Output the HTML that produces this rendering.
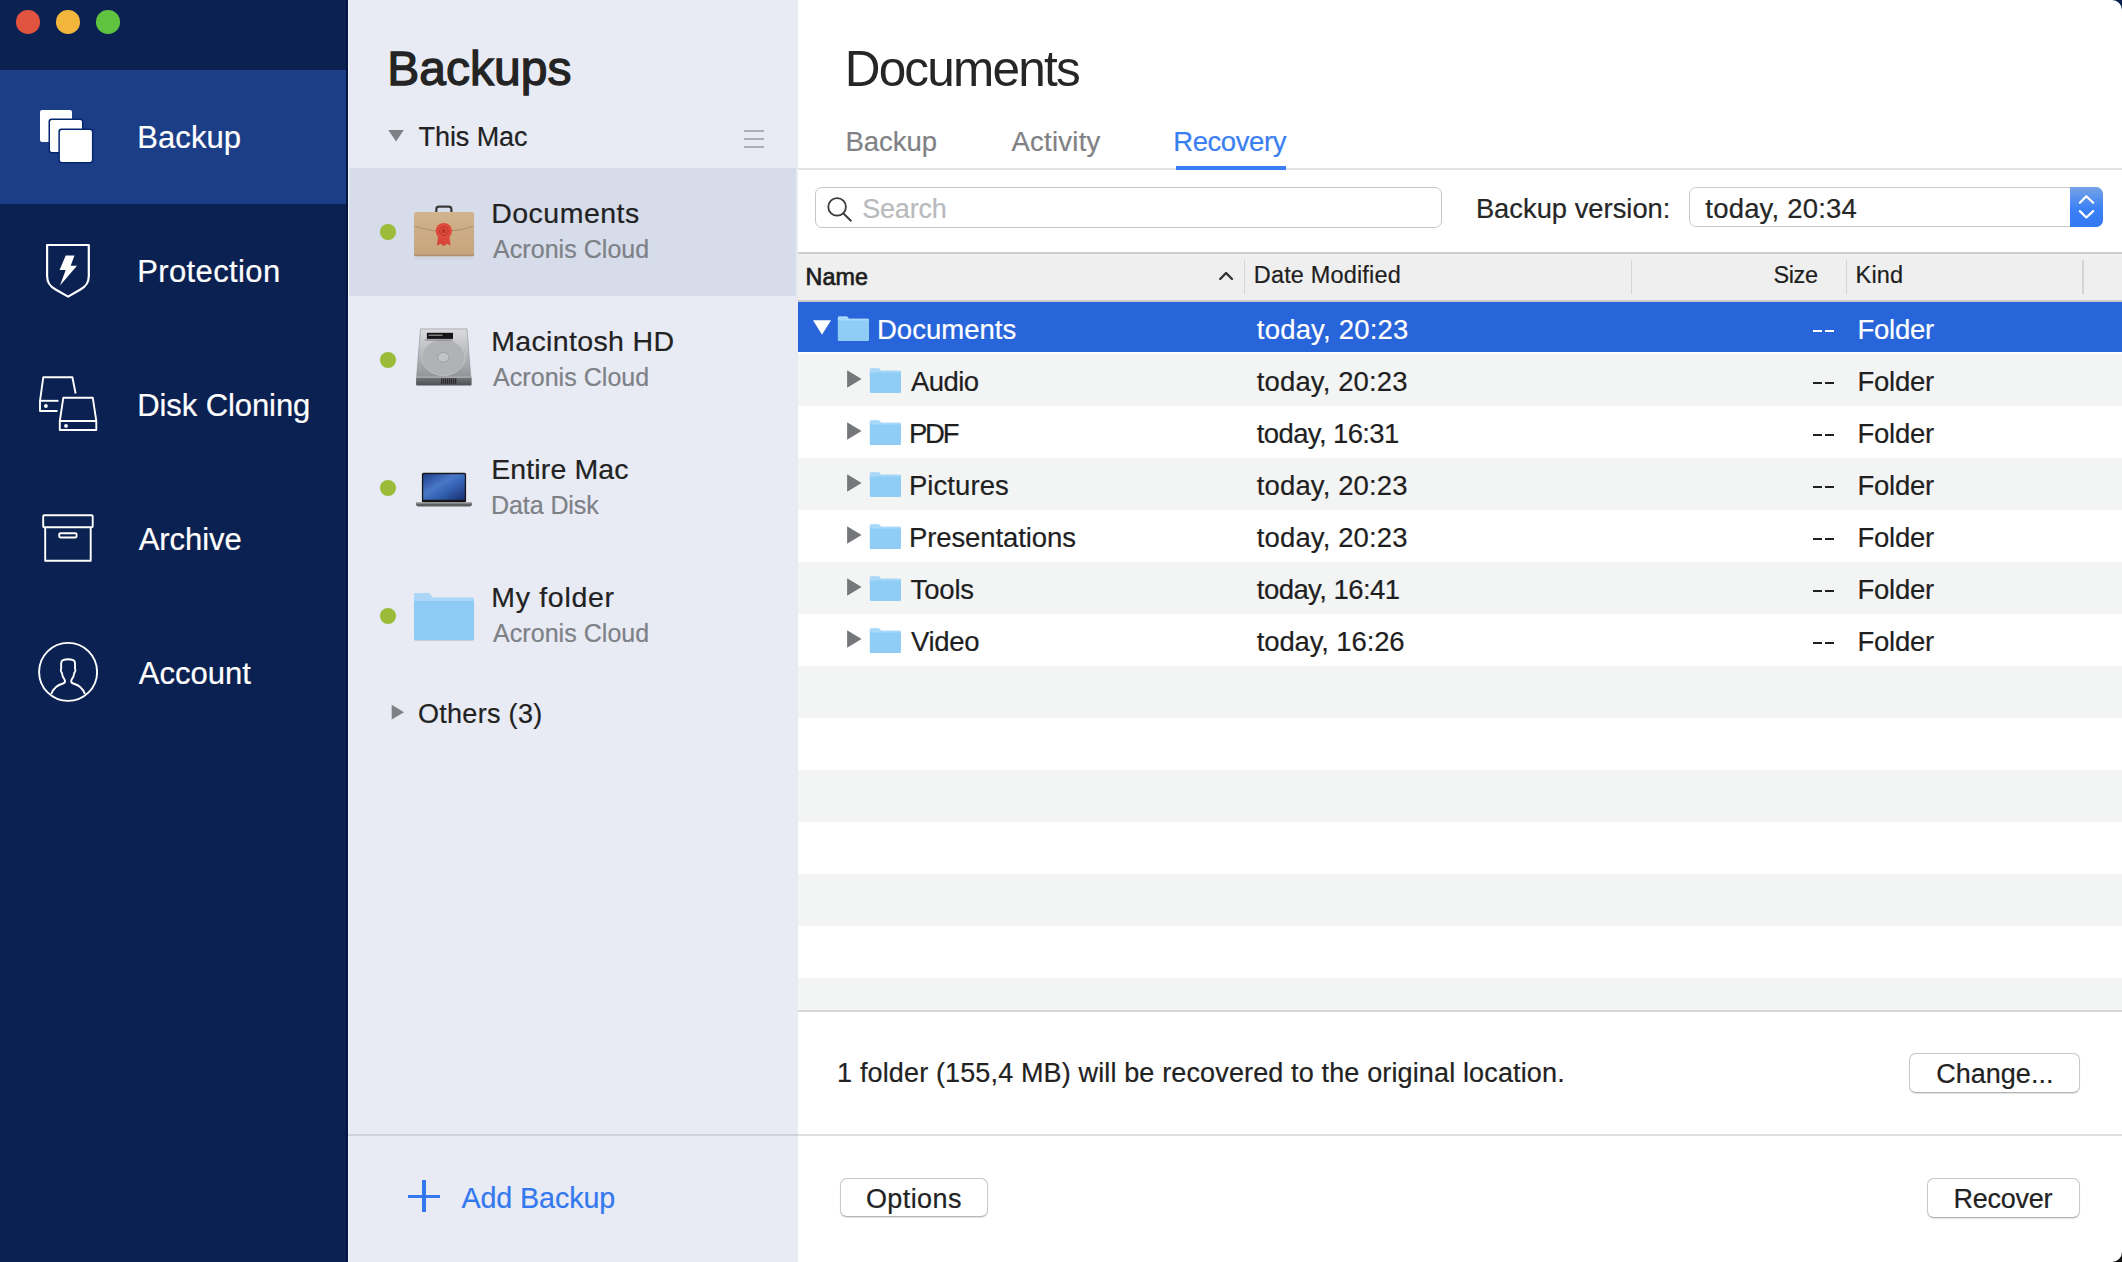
<!DOCTYPE html>
<html><head><meta charset="utf-8"><style>
html,body{margin:0;padding:0;}
body{width:2122px;height:1262px;position:relative;overflow:hidden;background:#0b2151;font-family:"Liberation Sans",sans-serif;}
.t{position:absolute;line-height:1;white-space:nowrap;-webkit-text-stroke:0.2px currentColor;}
</style></head><body>
<div style="position:absolute;left:0px;top:0px;width:348px;height:1262px;background:#0b2151;"></div>
<div style="position:absolute;left:0px;top:70px;width:346px;height:134px;background:#1b3e87;"></div>
<div style="position:absolute;left:346px;top:0px;width:2px;height:1262px;background:#031541;"></div>
<div style="position:absolute;left:16.0px;top:10.099999999999998px;width:23.6px;height:23.6px;border-radius:50%;background:#e0533f"></div>
<div style="position:absolute;left:56.0px;top:10.099999999999998px;width:23.6px;height:23.6px;border-radius:50%;background:#f3b63d"></div>
<div style="position:absolute;left:96.0px;top:10.099999999999998px;width:23.6px;height:23.6px;border-radius:50%;background:#5fc340"></div>
<div class="t" style="left:137.3px;top:121.8px;font-size:31px;color:#fff;letter-spacing:0.08px;">Backup</div>
<div class="t" style="left:137.2px;top:255.8px;font-size:31px;color:#fff;letter-spacing:0.38px;">Protection</div>
<div class="t" style="left:137.2px;top:389.6px;font-size:31px;color:#fff;letter-spacing:-0.08px;">Disk Cloning</div>
<div class="t" style="left:138.7px;top:523.5px;font-size:31px;color:#fff;letter-spacing:-0.07px;">Archive</div>
<div class="t" style="left:138.7px;top:657.6px;font-size:31px;color:#fff;letter-spacing:0.02px;">Account</div>
<svg style="position:absolute;left:0;top:0" width="348" height="760" viewBox="0 0 348 760">
<rect x="40" y="110" width="32" height="32" rx="2" fill="#fff"/>
<rect x="48.5" y="118.5" width="35" height="35" rx="3" fill="#062670"/>
<rect x="50" y="120" width="32" height="32" rx="2" fill="#fff"/>
<rect x="58.4" y="128.4" width="35" height="35" rx="3" fill="#062670"/>
<rect x="59.9" y="129.9" width="32" height="32" rx="2" fill="#fff"/>
<g fill="none" stroke="#fff" stroke-width="2.2" stroke-linejoin="round">
<path d="M47.1 245 H88.8 V276 C88.8 283 86 286.5 80 289.8 L68.1 296.6 L56 289.8 C50 286.5 47.1 283 47.1 276 Z"/>
</g>
<path fill="#fff" d="M65.7 255.4 H74.5 L70.7 265.7 H77 L60 285.5 L65.7 270 H59.6 Z"/>
<g fill="none" stroke="#fff" stroke-width="1.9" stroke-linejoin="round">
<path d="M57.5 411 H40 V400.8 L43.3 377.2 H72.4 L75.6 393.5"/>
<path d="M40 400.8 H58.5"/>
<path d="M59.8 430 V421 L63.3 397.8 H92.8 L96.3 421 V430 Z"/>
<path d="M59.8 421 H96.3"/>
<rect x="43.2" y="515.2" width="49.5" height="12" rx="1"/>
<path d="M45.2 527.2 V560.7 H90.7 V527.2"/>
<rect x="59.2" y="533.3" width="17.4" height="4.2" rx="1.2"/>
<circle cx="68.1" cy="671.9" r="29"/>
<path d="M51.3 694 C53.5 688 57 685 63 683.5 C64.5 683 65.3 681.5 64.8 680 C63 677.5 62 675 61.8 672.5 C60.8 672 60.6 670 61.2 668.7 C61 666 61 663 61.5 661.5 C62.5 659.8 65 659.2 68.1 659.2 C71.2 659.2 73.7 659.8 74.7 661.5 C75.2 663 75.2 666 75 668.7 C75.6 670 75.4 672 74.4 672.5 C74.2 675 73.2 677.5 71.4 680 C70.9 681.5 71.7 683 73.2 683.5 C79.2 685 82.7 688 84.9 694"/>
</g>
<g fill="#fff"><circle cx="45.9" cy="406" r="1.9"/><circle cx="66" cy="425.9" r="1.9"/></g>
</svg>
<div style="position:absolute;left:348px;top:0px;width:450px;height:1262px;background:#e8ebf4;"></div>
<div style="position:absolute;left:348px;top:0px;width:1px;height:1262px;background:#f4f6fc;"></div>
<div style="position:absolute;left:349px;top:168px;width:447px;height:128px;background:#d6dcea;"></div>
<div class="t" style="left:387.3px;top:45.0px;font-size:48px;color:#242424;-webkit-text-stroke:1.3px #242424;">Backups</div>
<svg style="position:absolute;left:380px;top:120px" width="40" height="40"><path d="M8.3 10 H23.8 L16.05 21.6 Z" fill="#7e8185"/></svg>
<div class="t" style="left:418.6px;top:123.7px;font-size:27px;color:#222;letter-spacing:-0.09px;">This Mac</div>
<div style="position:absolute;left:743.6px;top:130px;width:20.6px;height:2px;background:#aeafb2;"></div>
<div style="position:absolute;left:743.6px;top:138px;width:20.6px;height:2px;background:#aeafb2;"></div>
<div style="position:absolute;left:743.6px;top:146px;width:20.6px;height:2px;background:#aeafb2;"></div>
<div style="position:absolute;left:380.2px;top:224.04999999999998px;width:15.7px;height:15.7px;border-radius:50%;background:#9cbb3b"></div>
<div class="t" style="left:491.2px;top:199.2px;font-size:28.5px;color:#222;letter-spacing:0.49px;">Documents</div>
<div class="t" style="left:493.1px;top:236.5px;font-size:25px;color:#7d8186;letter-spacing:0.04px;">Acronis Cloud</div>
<div style="position:absolute;left:380.2px;top:352.04999999999995px;width:15.7px;height:15.7px;border-radius:50%;background:#9cbb3b"></div>
<div class="t" style="left:491.2px;top:327.2px;font-size:28.5px;color:#222;letter-spacing:0.35px;">Macintosh HD</div>
<div class="t" style="left:493.1px;top:364.5px;font-size:25px;color:#7d8186;letter-spacing:0.04px;">Acronis Cloud</div>
<div style="position:absolute;left:380.2px;top:480.04999999999995px;width:15.7px;height:15.7px;border-radius:50%;background:#9cbb3b"></div>
<div class="t" style="left:491.2px;top:455.2px;font-size:28.5px;color:#222;letter-spacing:0.12px;">Entire Mac</div>
<div class="t" style="left:491.1px;top:492.5px;font-size:25px;color:#7d8186;letter-spacing:-0.09px;">Data Disk</div>
<div style="position:absolute;left:380.2px;top:608.0500000000001px;width:15.7px;height:15.7px;border-radius:50%;background:#9cbb3b"></div>
<div class="t" style="left:491.2px;top:583.2px;font-size:28.5px;color:#222;letter-spacing:0.71px;">My folder</div>
<div class="t" style="left:493.1px;top:620.5px;font-size:25px;color:#7d8186;letter-spacing:0.04px;">Acronis Cloud</div>
<svg style="position:absolute;left:405px;top:195px" width="80" height="70" viewBox="0 0 80 70">
<defs><linearGradient id="bc" x1="0" y1="0" x2="0" y2="1"><stop offset="0" stop-color="#d2b48f"/><stop offset="0.35" stop-color="#cdae87"/><stop offset="1" stop-color="#c7a57d"/></linearGradient></defs>
<rect x="10" y="62" width="58" height="2.5" rx="1" fill="#cfd3dd"/>
<path d="M31.3 17.2 V14.3 Q31.3 11.7 33.9 11.7 H43.8 Q46.4 11.7 46.4 14.3 V17.2" fill="none" stroke="#3a3a3a" stroke-width="2.2"/>
<rect x="9" y="16.9" width="60.1" height="44.3" rx="2.2" fill="url(#bc)"/>
<path d="M9.5 31.3 Q24 35.5 33 36 M45 36 Q56 35.5 68.6 31.3" fill="none" stroke="#9e8466" stroke-width="0.9" opacity="0.8"/>
<rect x="9" y="59.5" width="60.1" height="1.7" fill="#9b8264" opacity="0.6"/>
<path d="M33.3 40 L31.8 50.8 L35.5 48.8 L38.8 51.2 L42 48.8 L45.6 50.8 L44.2 40 Z" fill="#d9473a"/>
<circle cx="38.8" cy="36.1" r="8.2" fill="#de4b3c"/>
<circle cx="38.8" cy="36.1" r="4.3" fill="none" stroke="#b8352b" stroke-width="1"/>
<circle cx="38.8" cy="36.1" r="2" fill="#b8352b"/>
</svg>
<svg style="position:absolute;left:410px;top:322px" width="70" height="70" viewBox="0 0 70 70">
<defs><linearGradient id="hd" x1="0" y1="0" x2="0" y2="1"><stop offset="0" stop-color="#dcdcde"/><stop offset="0.5" stop-color="#b9babd"/><stop offset="1" stop-color="#939497"/></linearGradient>
<linearGradient id="hdf" x1="0" y1="0" x2="0" y2="1"><stop offset="0" stop-color="#77787b"/><stop offset="1" stop-color="#4e4f52"/></linearGradient></defs>
<path d="M10.5 6.9 H57 L60.8 54.8 H6.6 Z" fill="url(#hd)" stroke="#8c8d90" stroke-width="0.6"/>
<ellipse cx="33.4" cy="35.5" rx="21.5" ry="18" fill="#b1b2b5" stroke="#c4c5c7" stroke-width="0.8"/>
<ellipse cx="33.4" cy="35.3" rx="5.6" ry="4.8" fill="#c2c3c5" stroke="#8e8f92" stroke-width="0.6"/>
<rect x="16.9" y="10.8" width="26.1" height="6.1" fill="#151515"/><rect x="18.5" y="12.6" width="14" height="1.3" fill="#8d8d8d"/>
<rect x="14.8" y="17.5" width="28" height="1.2" fill="#8a8b8e"/>
<rect x="6.1" y="54.6" width="55.5" height="9" rx="1" fill="url(#hdf)"/>
<rect x="6.1" y="54.6" width="55.5" height="1" fill="#c8c8ca"/>
<g fill="#1a1a1a"><rect x="31.2" y="56.3" width="1" height="5.5"/><rect x="33.2" y="56.3" width="1" height="5.5"/><rect x="35.2" y="56.3" width="1" height="5.5"/><rect x="37.2" y="56.3" width="1" height="5.5"/><rect x="39.2" y="56.3" width="1" height="5.5"/><rect x="41.2" y="56.3" width="1" height="5.5"/><rect x="43.2" y="56.3" width="1" height="5.5"/><rect x="45.2" y="56.3" width="1" height="5.5"/></g>
</svg>
<svg style="position:absolute;left:405px;top:455px" width="80" height="60" viewBox="0 0 80 60">
<defs><linearGradient id="scr" x1="0" y1="0" x2="1" y2="1"><stop offset="0" stop-color="#1f3f8c"/><stop offset="0.4" stop-color="#4a78c8"/><stop offset="0.6" stop-color="#3563b4"/><stop offset="1" stop-color="#182f70"/></linearGradient></defs>
<rect x="16.9" y="17.8" width="44.2" height="29.8" rx="1.6" fill="#161616"/>
<rect x="18.2" y="19.2" width="41.6" height="25.6" fill="url(#scr)"/>
<path d="M11.1 47.4 H66.9 V49.6 Q66.9 51.6 64.5 51.6 H13.5 Q11.1 51.6 11.1 49.6 Z" fill="#5d5e61"/>
<rect x="11.1" y="47.4" width="55.8" height="1.1" fill="#a9aaad"/>
</svg>
<svg style="position:absolute;left:405px;top:580px" width="80" height="70" viewBox="0 0 80 70">
<path d="M9 14.6 Q9 13 10.6 13 H22.6 Q24 13 25 14.3 L27.6 17.8 H67.3 Q69.1 17.8 69.1 19.6 V58.4 Q69.1 60.2 67.3 60.2 H10.8 Q9 60.2 9 58.4 Z" fill="#8dcbf5"/>
<path d="M9 14.6 Q9 13 10.6 13 H22.6 Q24 13 25 14.3 L27.6 17.8 H67.3 Q69.1 17.8 69.1 19.6 V21.1 H9 Z" fill="#abd6f7"/>
<rect x="9.5" y="60.2" width="59" height="1" fill="#c9ccd6"/>
</svg>
<div class="t" style="left:417.9px;top:701.1px;font-size:27px;color:#222;letter-spacing:0.31px;">Others (3)</div>
<svg style="position:absolute;left:380px;top:695px" width="40" height="40"><path d="M11.7 9.7 V24.6 L24 17.15 Z" fill="#7e8185"/></svg>
<div style="position:absolute;left:348px;top:1134px;width:450px;height:1.5px;background:#cfd2d9;"></div>
<div style="position:absolute;left:407.9px;top:1194.5px;width:32.1px;height:3.2px;background:#3478f0;"></div>
<div style="position:absolute;left:422.4px;top:1179.9px;width:3.2px;height:32.1px;background:#3478f0;"></div>
<div class="t" style="left:461.4px;top:1183.7px;font-size:28.7px;color:#3478f0;letter-spacing:-0.09px;">Add Backup</div>
<div style="position:absolute;left:798px;top:0px;width:1324px;height:1262px;background:#fff;"></div>
<div class="t" style="left:844.7px;top:44.3px;font-size:49.5px;color:#262626;letter-spacing:-1.8px;-webkit-text-stroke:0;">Documents</div>
<div class="t" style="left:845.4px;top:127.6px;font-size:27.5px;color:#808184;letter-spacing:-0.02px;">Backup</div>
<div class="t" style="left:1011.5px;top:127.6px;font-size:27.5px;color:#808184;letter-spacing:0.24px;">Activity</div>
<div class="t" style="left:1173.2px;top:127.6px;font-size:27.5px;color:#3a7ff2;letter-spacing:-0.42px;">Recovery</div>
<div style="position:absolute;left:798px;top:168px;width:1324px;height:2px;background:#e3e4e5;"></div>
<div style="position:absolute;left:1176px;top:166px;width:110px;height:4px;background:#3a7ff2;"></div>
<div style="position:absolute;left:815.2px;top:187.1px;width:627px;height:41.4px;box-sizing:border-box;border:1.5px solid #c6c6c9;border-radius:7px;background:#fff"></div>
<svg style="position:absolute;left:820px;top:190px" width="40" height="40"><circle cx="17.1" cy="16.9" r="8.8" fill="none" stroke="#3c3c3c" stroke-width="1.8"/><path d="M23.2 23.2 L31.4 31.3" stroke="#3c3c3c" stroke-width="1.9"/></svg>
<div class="t" style="left:862.2px;top:195.9px;font-size:27px;color:#b9babd;letter-spacing:-0.19px;">Search</div>
<div class="t" style="left:1475.9px;top:194.8px;font-size:27.3px;color:#262626;letter-spacing:0.02px;">Backup version:</div>
<div style="position:absolute;left:1688.7px;top:187.2px;width:414px;height:39.6px;box-sizing:border-box;border:1.5px solid #c9c9cc;border-radius:7px;background:#fff"></div>
<div style="position:absolute;left:2070px;top:187px;width:33px;height:40px;border-radius:0 7px 7px 0;background:linear-gradient(#76a3e6,#3a80f6 55%,#3479f2)"></div>
<svg style="position:absolute;left:2070px;top:187px" width="33" height="40"><path d="M9.9 15.8 L16.3 9.2 L23.2 15.8 M9.9 24.1 L16.3 30.5 L23.2 24.1" fill="none" stroke="#fff" stroke-width="2.2" stroke-linecap="round" stroke-linejoin="round"/></svg>
<div class="t" style="left:1705.3px;top:194.6px;font-size:27.5px;color:#262626;letter-spacing:0.2px;">today, 20:34</div>
<div style="position:absolute;left:798px;top:252px;width:1324px;height:1.5px;background:#cdcdcd;"></div>
<div style="position:absolute;left:798px;top:253.5px;width:1324px;height:46.5px;background:#efefef;"></div>
<div style="position:absolute;left:798px;top:300px;width:1324px;height:2px;background:#cacaca;"></div>
<div style="position:absolute;left:1244.2px;top:260px;width:1.3px;height:34px;background:#d3d4d8;"></div>
<div style="position:absolute;left:1630.7px;top:260px;width:1.3px;height:34px;background:#d3d4d8;"></div>
<div style="position:absolute;left:1846.1000000000001px;top:260px;width:1.3px;height:34px;background:#d3d4d8;"></div>
<div style="position:absolute;left:2082.3px;top:260px;width:1.3px;height:34px;background:#d3d4d8;"></div>
<div class="t" style="left:805.6px;top:265.5px;font-size:23.3px;color:#1e1e1e;letter-spacing:0.1px;-webkit-text-stroke:0.7px #1e1e1e;">Name</div>
<svg style="position:absolute;left:1210px;top:265px" width="30" height="20"><path d="M10.2 14 L16.1 8 L22 14" fill="none" stroke="#333" stroke-width="2.4" stroke-linecap="round" stroke-linejoin="round"/></svg>
<div class="t" style="left:1253.8px;top:263.8px;font-size:23.5px;color:#1e1e1e;letter-spacing:0.16px;">Date Modified</div>
<div class="t" style="left:1773.5px;top:264.0px;font-size:23.5px;color:#1e1e1e;letter-spacing:-0.4px;">Size</div>
<div class="t" style="left:1855.6px;top:264.0px;font-size:23.5px;color:#1e1e1e;letter-spacing:0.12px;">Kind</div>
<div style="position:absolute;left:798px;top:302px;width:1324px;height:50px;background:#2864da;"></div>
<div style="position:absolute;left:798px;top:354px;width:1324px;height:52px;background:#f3f4f4;"></div>
<div style="position:absolute;left:798px;top:458px;width:1324px;height:52px;background:#f3f4f4;"></div>
<div style="position:absolute;left:798px;top:562px;width:1324px;height:52px;background:#f3f4f4;"></div>
<div style="position:absolute;left:798px;top:666px;width:1324px;height:52px;background:#f3f4f4;"></div>
<div style="position:absolute;left:798px;top:770px;width:1324px;height:52px;background:#f3f4f4;"></div>
<div style="position:absolute;left:798px;top:874px;width:1324px;height:52px;background:#f3f4f4;"></div>
<div style="position:absolute;left:798px;top:978px;width:1324px;height:32px;background:#f3f4f4;"></div>
<div style="position:absolute;left:798px;top:1010px;width:1324px;height:1.5px;background:#d8d8d8;"></div>
<svg style="position:absolute;left:805px;top:312px" width="40" height="30"><path d="M8 8.2 H26 L17 22.7 Z" fill="#fff"/></svg>
<svg style="position:absolute;left:837px;top:315.6px" width="33" height="26" viewBox="0 0 33 26"><path d="M0.8 2 Q0.8 0.6 2.2 0.6 H10 L12 2.8 H30.8 Q32 2.8 32 4 V23.8 Q32 25 30.8 25 H2 Q0.8 25 0.8 23.8 Z" fill="#8fcdf6"/><path d="M0.8 2 Q0.8 0.6 2.2 0.6 H10 L12 2.8 H30.8 Q32 2.8 32 4 V4.6 H0.8 Z" fill="#a9d8f8"/></svg>
<div class="t" style="left:877.0px;top:315.7px;font-size:27.5px;color:#fff;letter-spacing:0.01px;">Documents</div>
<div class="t" style="left:1256.8px;top:315.7px;font-size:27.5px;color:#fff;letter-spacing:0.2px;">today, 20:23</div>
<div style="position:absolute;left:1812.8px;top:329.6px;width:9.2px;height:2.4px;background:#fff;"></div>
<div style="position:absolute;left:1824.9px;top:329.6px;width:9.2px;height:2.4px;background:#fff;"></div>
<div class="t" style="left:1857.4px;top:315.7px;font-size:27.5px;color:#fff;letter-spacing:-0.22px;">Folder</div>
<svg style="position:absolute;left:840px;top:362.2px" width="30" height="30"><path d="M7.1 8.3 V25.8 L21.6 17.05 Z" fill="#75777b"/></svg>
<svg style="position:absolute;left:869px;top:367.8px" width="33" height="26" viewBox="0 0 33 26"><path d="M0.8 2 Q0.8 0.6 2.2 0.6 H10 L12 2.8 H30.8 Q32 2.8 32 4 V23.8 Q32 25 30.8 25 H2 Q0.8 25 0.8 23.8 Z" fill="#8fcdf6"/><path d="M0.8 2 Q0.8 0.6 2.2 0.6 H10 L12 2.8 H30.8 Q32 2.8 32 4 V4.6 H0.8 Z" fill="#a9d8f8"/></svg>
<div class="t" style="left:911.1px;top:367.7px;font-size:27.5px;color:#1f1f1f;letter-spacing:-0.57px;">Audio</div>
<div class="t" style="left:1256.8px;top:367.7px;font-size:27.5px;color:#1f1f1f;letter-spacing:0.12px;">today, 20:23</div>
<div style="position:absolute;left:1812.8px;top:381.6px;width:9.2px;height:2.4px;background:#1f1f1f;"></div>
<div style="position:absolute;left:1824.9px;top:381.6px;width:9.2px;height:2.4px;background:#1f1f1f;"></div>
<div class="t" style="left:1857.4px;top:367.7px;font-size:27.5px;color:#1f1f1f;letter-spacing:-0.22px;">Folder</div>
<svg style="position:absolute;left:840px;top:414.2px" width="30" height="30"><path d="M7.1 8.3 V25.8 L21.6 17.05 Z" fill="#75777b"/></svg>
<svg style="position:absolute;left:869px;top:419.8px" width="33" height="26" viewBox="0 0 33 26"><path d="M0.8 2 Q0.8 0.6 2.2 0.6 H10 L12 2.8 H30.8 Q32 2.8 32 4 V23.8 Q32 25 30.8 25 H2 Q0.8 25 0.8 23.8 Z" fill="#8fcdf6"/><path d="M0.8 2 Q0.8 0.6 2.2 0.6 H10 L12 2.8 H30.8 Q32 2.8 32 4 V4.6 H0.8 Z" fill="#a9d8f8"/></svg>
<div class="t" style="left:908.9px;top:419.7px;font-size:27.5px;color:#1f1f1f;letter-spacing:-2.13px;">PDF</div>
<div class="t" style="left:1256.8px;top:419.7px;font-size:27.5px;color:#1f1f1f;letter-spacing:-0.62px;">today, 16:31</div>
<div style="position:absolute;left:1812.8px;top:433.6px;width:9.2px;height:2.4px;background:#1f1f1f;"></div>
<div style="position:absolute;left:1824.9px;top:433.6px;width:9.2px;height:2.4px;background:#1f1f1f;"></div>
<div class="t" style="left:1857.4px;top:419.7px;font-size:27.5px;color:#1f1f1f;letter-spacing:-0.22px;">Folder</div>
<svg style="position:absolute;left:840px;top:466.2px" width="30" height="30"><path d="M7.1 8.3 V25.8 L21.6 17.05 Z" fill="#75777b"/></svg>
<svg style="position:absolute;left:869px;top:471.8px" width="33" height="26" viewBox="0 0 33 26"><path d="M0.8 2 Q0.8 0.6 2.2 0.6 H10 L12 2.8 H30.8 Q32 2.8 32 4 V23.8 Q32 25 30.8 25 H2 Q0.8 25 0.8 23.8 Z" fill="#8fcdf6"/><path d="M0.8 2 Q0.8 0.6 2.2 0.6 H10 L12 2.8 H30.8 Q32 2.8 32 4 V4.6 H0.8 Z" fill="#a9d8f8"/></svg>
<div class="t" style="left:908.9px;top:471.7px;font-size:27.5px;color:#1f1f1f;letter-spacing:0.08px;">Pictures</div>
<div class="t" style="left:1256.8px;top:471.7px;font-size:27.5px;color:#1f1f1f;letter-spacing:0.12px;">today, 20:23</div>
<div style="position:absolute;left:1812.8px;top:485.6px;width:9.2px;height:2.4px;background:#1f1f1f;"></div>
<div style="position:absolute;left:1824.9px;top:485.6px;width:9.2px;height:2.4px;background:#1f1f1f;"></div>
<div class="t" style="left:1857.4px;top:471.7px;font-size:27.5px;color:#1f1f1f;letter-spacing:-0.22px;">Folder</div>
<svg style="position:absolute;left:840px;top:518.2px" width="30" height="30"><path d="M7.1 8.3 V25.8 L21.6 17.05 Z" fill="#75777b"/></svg>
<svg style="position:absolute;left:869px;top:523.8px" width="33" height="26" viewBox="0 0 33 26"><path d="M0.8 2 Q0.8 0.6 2.2 0.6 H10 L12 2.8 H30.8 Q32 2.8 32 4 V23.8 Q32 25 30.8 25 H2 Q0.8 25 0.8 23.8 Z" fill="#8fcdf6"/><path d="M0.8 2 Q0.8 0.6 2.2 0.6 H10 L12 2.8 H30.8 Q32 2.8 32 4 V4.6 H0.8 Z" fill="#a9d8f8"/></svg>
<div class="t" style="left:908.9px;top:523.7px;font-size:27.5px;color:#1f1f1f;letter-spacing:-0.09px;">Presentations</div>
<div class="t" style="left:1256.8px;top:523.7px;font-size:27.5px;color:#1f1f1f;letter-spacing:0.12px;">today, 20:23</div>
<div style="position:absolute;left:1812.8px;top:537.6px;width:9.2px;height:2.4px;background:#1f1f1f;"></div>
<div style="position:absolute;left:1824.9px;top:537.6px;width:9.2px;height:2.4px;background:#1f1f1f;"></div>
<div class="t" style="left:1857.4px;top:523.7px;font-size:27.5px;color:#1f1f1f;letter-spacing:-0.22px;">Folder</div>
<svg style="position:absolute;left:840px;top:570.2px" width="30" height="30"><path d="M7.1 8.3 V25.8 L21.6 17.05 Z" fill="#75777b"/></svg>
<svg style="position:absolute;left:869px;top:575.8px" width="33" height="26" viewBox="0 0 33 26"><path d="M0.8 2 Q0.8 0.6 2.2 0.6 H10 L12 2.8 H30.8 Q32 2.8 32 4 V23.8 Q32 25 30.8 25 H2 Q0.8 25 0.8 23.8 Z" fill="#8fcdf6"/><path d="M0.8 2 Q0.8 0.6 2.2 0.6 H10 L12 2.8 H30.8 Q32 2.8 32 4 V4.6 H0.8 Z" fill="#a9d8f8"/></svg>
<div class="t" style="left:910.6px;top:575.7px;font-size:27.5px;color:#1f1f1f;letter-spacing:-0.17px;">Tools</div>
<div class="t" style="left:1256.8px;top:575.7px;font-size:27.5px;color:#1f1f1f;letter-spacing:-0.55px;">today, 16:41</div>
<div style="position:absolute;left:1812.8px;top:589.6px;width:9.2px;height:2.4px;background:#1f1f1f;"></div>
<div style="position:absolute;left:1824.9px;top:589.6px;width:9.2px;height:2.4px;background:#1f1f1f;"></div>
<div class="t" style="left:1857.4px;top:575.7px;font-size:27.5px;color:#1f1f1f;letter-spacing:-0.22px;">Folder</div>
<svg style="position:absolute;left:840px;top:622.2px" width="30" height="30"><path d="M7.1 8.3 V25.8 L21.6 17.05 Z" fill="#75777b"/></svg>
<svg style="position:absolute;left:869px;top:627.8px" width="33" height="26" viewBox="0 0 33 26"><path d="M0.8 2 Q0.8 0.6 2.2 0.6 H10 L12 2.8 H30.8 Q32 2.8 32 4 V23.8 Q32 25 30.8 25 H2 Q0.8 25 0.8 23.8 Z" fill="#8fcdf6"/><path d="M0.8 2 Q0.8 0.6 2.2 0.6 H10 L12 2.8 H30.8 Q32 2.8 32 4 V4.6 H0.8 Z" fill="#a9d8f8"/></svg>
<div class="t" style="left:911.1px;top:627.7px;font-size:27.5px;color:#1f1f1f;letter-spacing:-0.34px;">Video</div>
<div class="t" style="left:1256.8px;top:627.7px;font-size:27.5px;color:#1f1f1f;letter-spacing:-0.14px;">today, 16:26</div>
<div style="position:absolute;left:1812.8px;top:641.6px;width:9.2px;height:2.4px;background:#1f1f1f;"></div>
<div style="position:absolute;left:1824.9px;top:641.6px;width:9.2px;height:2.4px;background:#1f1f1f;"></div>
<div class="t" style="left:1857.4px;top:627.7px;font-size:27.5px;color:#1f1f1f;letter-spacing:-0.22px;">Folder</div>
<div class="t" style="left:837.1px;top:1059.9px;font-size:27px;color:#222;letter-spacing:0.14px;">1 folder (155,4 MB) will be recovered to the original location.</div>
<div style="position:absolute;left:798px;top:1134px;width:1324px;height:1.5px;background:#dedfe0;"></div>
<div style="position:absolute;left:1909.4px;top:1053.4px;width:171px;height:39.2px;box-sizing:border-box;border:1px solid #c9c9cb;border-bottom-color:#b5b5b8;border-radius:7px;background:#fff;box-shadow:0 0.5px 1px rgba(0,0,0,0.12)"></div>
<div class="t" style="left:1936.2px;top:1061.3px;font-size:27px;color:#222;letter-spacing:0.02px;">Change...</div>
<div style="position:absolute;left:839.6px;top:1178.4px;width:148.5px;height:39px;box-sizing:border-box;border:1px solid #c9c9cb;border-bottom-color:#b5b5b8;border-radius:7px;background:#fff;box-shadow:0 0.5px 1px rgba(0,0,0,0.12)"></div>
<div class="t" style="left:865.9px;top:1185.9px;font-size:27px;color:#222;letter-spacing:0.42px;">Options</div>
<div style="position:absolute;left:1927.4px;top:1178px;width:153px;height:39.6px;box-sizing:border-box;border:1px solid #c9c9cb;border-bottom-color:#b5b5b8;border-radius:7px;background:#fff;box-shadow:0 0.5px 1px rgba(0,0,0,0.12)"></div>
<div class="t" style="left:1953.6px;top:1186.1px;font-size:27px;color:#222;letter-spacing:-0.27px;">Recover</div>
<svg style="position:absolute;left:2112px;top:0" width="10" height="10"><path d="M0 0 H10 V10 A10 10 0 0 0 0 0 Z" fill="#0b2151"/></svg>
<svg style="position:absolute;left:2112px;top:1252px" width="10" height="10"><path d="M10 0 V10 H0 A10 10 0 0 0 10 0 Z" fill="#111"/></svg>
</body></html>
